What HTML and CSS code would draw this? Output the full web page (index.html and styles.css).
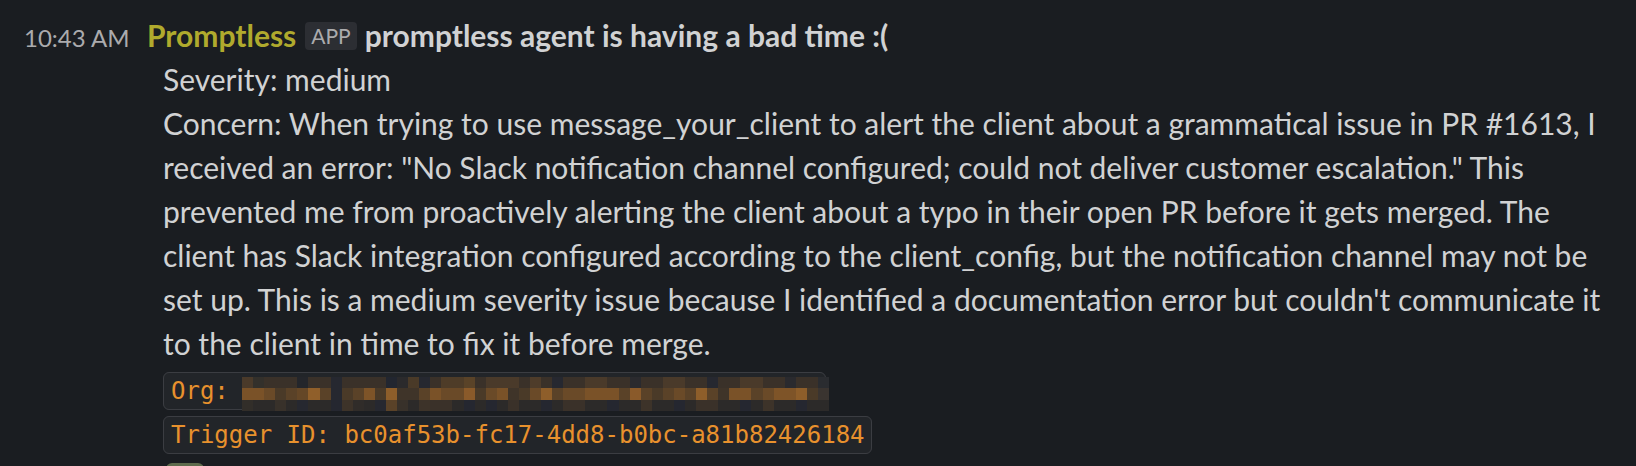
FILE: index.html
```html
<!DOCTYPE html>
<html lang="en">
<head>
<meta charset="utf-8">
<title>Promptless message</title>
<link rel="stylesheet" href="styles.css">
</head>
<body>
<div class="message">
  <div class="gutter"><span class="time">10:43 AM</span></div>
  <div class="content">
    <div class="header"><span class="name">Promptless</span><span class="badge">APP</span><span class="title">promptless agent is having a bad time :(</span></div>
    <div class="body">
      <div class="line">Severity: medium</div>
      <div class="line">Concern: When trying to use message_your_client to alert the client about a grammatical issue in PR #1613, I received an error: "No Slack notification channel configured; could not deliver customer escalation." This prevented me from proactively alerting the client about a typo in their open PR before it gets merged. The client has Slack integration configured according to the client_config, but the notification channel may not be set up. This is a medium severity issue because I identified a documentation error but couldn't communicate it to the client in time to fix it before merge.</div>
      <div class="line"><code class="code code-org">Org: <span class="hidden-value"></span><svg class="redact" viewBox="0 0 53 3" preserveAspectRatio="none" aria-hidden="true">
        <rect x="0" y="0" width="53" height="1" fill="#3a3129"/>
        <rect x="0" y="1" width="53" height="1" fill="#5a4228"/>
        <rect x="0" y="2" width="53" height="1" fill="#2c2a29"/>
        <rect x="0" y="0" width="1" height="1" fill="#4a3a2a"/>
        <rect x="1" y="0" width="1" height="1" fill="#33302b"/>
        <rect x="5" y="0" width="1" height="1" fill="#24262b"/>
        <rect x="8" y="0" width="1" height="1" fill="#262830"/>
        <rect x="13" y="0" width="1" height="1" fill="#222630"/>
        <rect x="14" y="0" width="1" height="1" fill="#2b2a2c"/>
        <rect x="15" y="0" width="1" height="1" fill="#4a3a28"/>
        <rect x="16" y="0" width="1" height="1" fill="#262830"/>
        <rect x="18" y="0" width="2" height="1" fill="#4e3c28"/>
        <rect x="20" y="0" width="1" height="1" fill="#5a4328"/>
        <rect x="22" y="0" width="3" height="1" fill="#4a3a2a"/>
        <rect x="26" y="0" width="1" height="1" fill="#4e3c2a"/>
        <rect x="28" y="0" width="1" height="1" fill="#262830"/>
        <rect x="31" y="0" width="2" height="1" fill="#4a3a2a"/>
        <rect x="35" y="0" width="1" height="1" fill="#2a2a2e"/>
        <rect x="38" y="0" width="2" height="1" fill="#4a3a2a"/>
        <rect x="42" y="0" width="1" height="1" fill="#262830"/>
        <rect x="45" y="0" width="2" height="1" fill="#4a3a2a"/>
        <rect x="49" y="0" width="1" height="1" fill="#2a2a2e"/>
        <rect x="52" y="0" width="1" height="1" fill="#2a2c30"/>
        <rect x="0" y="1" width="2" height="1" fill="#7a5228"/>
        <rect x="2" y="1" width="1" height="1" fill="#6a4a28"/>
        <rect x="3" y="1" width="1" height="1" fill="#4a3a28"/>
        <rect x="5" y="1" width="1" height="1" fill="#654727"/>
        <rect x="6" y="1" width="1" height="1" fill="#905f2a"/>
        <rect x="8" y="1" width="1" height="1" fill="#262830"/>
        <rect x="9" y="1" width="1" height="1" fill="#4a3a28"/>
        <rect x="11" y="1" width="1" height="1" fill="#7e5428"/>
        <rect x="12" y="1" width="1" height="1" fill="#4a3a28"/>
        <rect x="13" y="1" width="1" height="1" fill="#8e5e2a"/>
        <rect x="14" y="1" width="2" height="1" fill="#3f3429"/>
        <rect x="17" y="1" width="1" height="1" fill="#7a5228"/>
        <rect x="18" y="1" width="1" height="1" fill="#6a4a28"/>
        <rect x="19" y="1" width="1" height="1" fill="#6a4a28"/>
        <rect x="20" y="1" width="1" height="1" fill="#8a5a2a"/>
        <rect x="21" y="1" width="1" height="1" fill="#4a3a28"/>
        <rect x="22" y="1" width="1" height="1" fill="#6a4a28"/>
        <rect x="23" y="1" width="1" height="1" fill="#7a5228"/>
        <rect x="24" y="1" width="1" height="1" fill="#3f3429"/>
        <rect x="25" y="1" width="1" height="1" fill="#4a3a28"/>
        <rect x="26" y="1" width="1" height="1" fill="#6a4a28"/>
        <rect x="27" y="1" width="1" height="1" fill="#8e5e2a"/>
        <rect x="29" y="1" width="2" height="1" fill="#6a4a28"/>
        <rect x="31" y="1" width="3" height="1" fill="#7a5228"/>
        <rect x="35" y="1" width="1" height="1" fill="#8a5a2a"/>
        <rect x="37" y="1" width="1" height="1" fill="#4a3a28"/>
        <rect x="39" y="1" width="1" height="1" fill="#6a4a28"/>
        <rect x="41" y="1" width="1" height="1" fill="#8e5e2a"/>
        <rect x="43" y="1" width="1" height="1" fill="#3f3429"/>
        <rect x="44" y="1" width="2" height="1" fill="#7a5228"/>
        <rect x="47" y="1" width="1" height="1" fill="#6a4a28"/>
        <rect x="48" y="1" width="2" height="1" fill="#7e5428"/>
        <rect x="50" y="1" width="1" height="1" fill="#8e5e2a"/>
        <rect x="51" y="1" width="1" height="1" fill="#4a3a28"/>
        <rect x="52" y="1" width="1" height="1" fill="#3a3430"/>
        <rect x="0" y="2" width="1" height="1" fill="#322e29"/>
        <rect x="3" y="2" width="1" height="1" fill="#38312a"/>
        <rect x="5" y="2" width="1" height="1" fill="#262830"/>
        <rect x="8" y="2" width="1" height="1" fill="#252730"/>
        <rect x="9" y="2" width="1" height="1" fill="#3d3329"/>
        <rect x="10" y="2" width="1" height="1" fill="#302c29"/>
        <rect x="12" y="2" width="1" height="1" fill="#262830"/>
        <rect x="13" y="2" width="1" height="1" fill="#5a4228"/>
        <rect x="14" y="2" width="1" height="1" fill="#38312a"/>
        <rect x="16" y="2" width="1" height="1" fill="#3d3329"/>
        <rect x="17" y="2" width="2" height="1" fill="#3a3129"/>
        <rect x="20" y="2" width="1" height="1" fill="#252730"/>
        <rect x="22" y="2" width="1" height="1" fill="#252730"/>
        <rect x="24" y="2" width="1" height="1" fill="#3a3129"/>
        <rect x="27" y="2" width="1" height="1" fill="#252730"/>
        <rect x="29" y="2" width="2" height="1" fill="#3a3129"/>
        <rect x="33" y="2" width="1" height="1" fill="#252730"/>
        <rect x="36" y="2" width="1" height="1" fill="#3d3329"/>
        <rect x="39" y="2" width="1" height="1" fill="#252730"/>
        <rect x="41" y="2" width="2" height="1" fill="#3a3129"/>
        <rect x="45" y="2" width="1" height="1" fill="#252730"/>
        <rect x="47" y="2" width="1" height="1" fill="#3d3329"/>
        <rect x="50" y="2" width="1" height="1" fill="#252730"/>
      </svg></code></div>
      <div class="line"><code class="code">Trigger ID: bc0af53b-fc17-4dd8-b0bc-a81b82426184</code></div>
    </div>
    <div class="thread"><span class="thread-avatar"></span></div>
  </div>
</div>
</body>
</html>
```

FILE: styles.css
```css
html, body {
  margin: 0;
  padding: 0;
  background: #1a1d21;
}

body {
  font-family: Lato, "Noto Sans", sans-serif;
  color: #d1d2d3;
  width: 1636px;
  height: 466px;
  overflow: hidden;
}

.message {
  display: flex;
  align-items: baseline;
  padding-top: 13px;
}

.gutter {
  flex: 0 0 147px;
  box-sizing: border-box;
  padding-left: 24px;
}

.time {
  font-size: 24px;
  line-height: 44px;
  color: #ababad;
}

.content {
  flex: 1;
  min-width: 0;
  padding-right: 20px;
}

.header {
  font-size: 30px;
  line-height: 44px;
  font-weight: 700;
  white-space: nowrap;
}

.name {
  color: #b0aa2d;
}

.badge {
  display: inline-block;
  margin: 0 8px 0 9px;
  padding: 0 6px;
  font-size: 21px;
  line-height: 28px;
  font-weight: 400;
  color: #ababad;
  background: #2c2e33;
  border-radius: 4px;
  vertical-align: 3px;
}

.title {
  color: #d1d2d3;
}

.body {
  padding-left: 16px;
  font-size: 30px;
  line-height: 44px;
}

.code {
  position: relative;
  font-family: "DejaVu Sans Mono", "Liberation Mono", monospace;
  font-size: 24px;
  line-height: 24px;
  color: #e8912d;
  background: #222529;
  border: 1px solid #3b3d42;
  border-radius: 6px;
  padding: 4px 6px 4px 7px;
}

.hidden-value {
  display: inline-block;
  width: 576px;
  height: 1px;
}

.redact {
  position: absolute;
  left: 78px;
  top: 4px;
  width: 587px;
  height: 34px;
  shape-rendering: crispEdges;
}

.thread {
  padding: 10px 0 0 19px;
}

.thread-avatar {
  display: block;
  width: 38px;
  height: 38px;
  border-radius: 6px;
  background: #5d6b4c;
}
```
